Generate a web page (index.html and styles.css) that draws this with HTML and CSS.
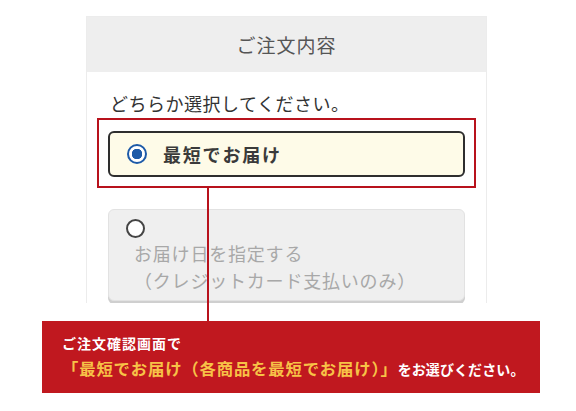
FILE: index.html
```html
<!DOCTYPE html>
<html lang="ja">
<head>
<meta charset="utf-8">
<link rel="stylesheet" href="styles.css">
</head>
<body>
<div class="stage">
  <div class="panel">
    <div class="head">ご注文内容</div>
    <div class="body">
      <p class="prompt">どちらか選択してください。</p>
      <div class="highlight">
        <div class="option selected">
          <span class="radio on"></span>
          <span class="label">最短でお届け</span>
        </div>
      </div>
      <div class="option disabled">
        <span class="radio off"></span>
        <span class="label2">お届け日を指定する<br>（クレジットカード支払いのみ）</span>
      </div>
    </div>
  </div>
  <div class="connector"></div>
  <div class="banner">
    <p class="line1">ご注文確認画面で</p>
    <p class="line2"><span class="hl">「最短でお届け（各商品を最短でお届け）」</span><span class="rest">をお選びください。</span></p>
  </div>
</div>
</body>
</html>
```
FILE: styles.css
```css
html, body {
  margin: 0;
  padding: 0;
  background: #fff;
}
body {
  font-family: "Noto Sans CJK JP", "Noto Sans", sans-serif;
  color: #333;
}
.stage {
  position: relative;
  width: 576px;
  height: 411px;
  padding-top: 16px;
  box-sizing: border-box;
}
.panel {
  margin-left: 86px;
  width: 401px;
  height: 287px;
  box-sizing: border-box;
  border: 1px solid #ececec;
  border-bottom: none;
  overflow: hidden;
}
.head {
  height: 55px;
  background: #eeeeee;
  display: flex;
  align-items: center;
  justify-content: center;
  font-size: 19px;
  color: #555;
  letter-spacing: 1px;
}
.body {
  padding: 18px 10px 0;
}
.prompt {
  margin: 0 0 2px 13px;
  font-size: 18px;
  line-height: 26px;
  letter-spacing: 0.5px;
  color: #333;
}
.highlight {
  border: 2px solid #b8121c;
  padding: 11px 9px 9px;
}
.option {
  display: flex;
  box-sizing: border-box;
  border-radius: 6px;
}
.option.selected {
  height: 46px;
  border: 2px solid #2e2e2e;
  background: #fefbe8;
  align-items: center;
  padding-left: 17px;
  gap: 16px;
}
.radio {
  display: block;
  box-sizing: border-box;
  border-radius: 50%;
  flex: none;
}
.radio.on {
  width: 20px;
  height: 20px;
  border: 2.5px solid #1d5aa8;
  background: radial-gradient(circle, #1d5aa8 0 5px, #fff 5.5px);
}
.label {
  font-size: 18px;
  font-weight: 700;
  letter-spacing: 1.8px;
  color: #3a3a3a;
}
.option.disabled {
  margin: 21px 11px 0;
  height: 92px;
  background: #efefef;
  border: 1px solid #e2e2e2;
  box-shadow: 0 3px 0 #cfcfcf;
  flex-direction: column;
  padding: 9px 0 0 17px;
}
.radio.off {
  width: 19px;
  height: 19px;
  border: 2.5px solid #444;
  background: #fff;
}
.label2 {
  margin: 2px 0 0 8px;
  font-size: 18px;
  line-height: 27px;
  letter-spacing: 0.8px;
  color: #a8a8a8;
}
.connector {
  position: absolute;
  left: 207px;
  top: 187px;
  width: 2px;
  height: 134px;
  background: #b8121c;
}
.banner {
  margin: 18px 0 0 42px;
  width: 498px;
  height: 72px;
  box-sizing: border-box;
  background: #c0181f;
  padding: 11px 0 0 20px;
  position: relative;
}
.banner p {
  margin: 0;
  font-weight: 700;
}
.line1 {
  font-size: 14px;
  line-height: 22px;
  color: #fff;
  letter-spacing: 1px;
}
.line2 {
  line-height: 28px;
  white-space: nowrap;
  margin-left: -6px;
}
.hl {
  font-size: 16.4px;
  color: #f7c247;
  letter-spacing: 0.8px;
}
.rest {
  font-size: 14px;
  color: #fff;
  letter-spacing: 0.1px;
}
```
